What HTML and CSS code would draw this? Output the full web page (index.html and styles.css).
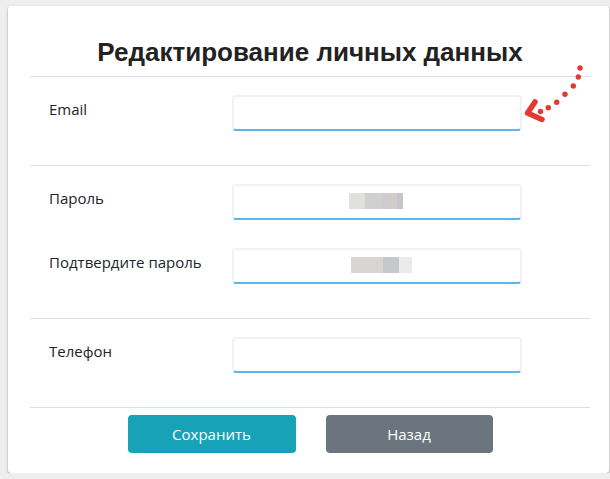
FILE: index.html
```html
<!DOCTYPE html>
<html lang="ru">
<head>
    <meta charset="UTF-8">
    <title>Редактирование личных данных</title>
    <link rel="stylesheet" href="styles.css">
</head>
<body>
<div class="card">
    <h1 class="card_title">Редактирование личных данных</h1>

    <div class="section">
        <div class="form_row">
            <label class="form_label" for="email">Email</label>
            <div class="field">
                <input id="email" class="form_input" type="text">
            </div>
        </div>
    </div>

    <div class="section">
        <div class="form_row">
            <label class="form_label" for="pass">Пароль</label>
            <div class="field">
                <input id="pass" class="form_input" type="text">
                <span class="blur blur_one">
                    <i style="background:#e0e0df;width:16px"></i><i style="background:#d0d0d0;width:16px"></i><i style="background:#cfcdcb;width:16px"></i><i style="background:#c5c6cc;width:6px"></i>
                </span>
            </div>
        </div>
        <div class="form_row">
            <label class="form_label" for="pass2">Подтвердите пароль</label>
            <div class="field">
                <input id="pass2" class="form_input" type="text">
                <span class="blur blur_two">
                    <i style="background:#d8d6d4;width:32px"></i><i style="background:#c7c8cb;width:16px"></i><i style="background:#ebebed;width:13px"></i>
                </span>
            </div>
        </div>
    </div>

    <div class="section">
        <div class="form_row">
            <label class="form_label" for="phone">Телефон</label>
            <div class="field">
                <input id="phone" class="form_input" type="text">
            </div>
        </div>
    </div>

    <div class="actions">
        <button class="btn btn_save">Сохранить</button>
        <button class="btn btn_back">Назад</button>
    </div>

    <!-- red dotted pointer drawn over the card -->
    <svg class="pointer" width="70" height="70" viewBox="0 0 70 70">
        <g fill="#e23a33">
            <circle cx="60" cy="8" r="2.7"/>
            <circle cx="58.3" cy="17" r="2.7"/>
            <circle cx="53.3" cy="26" r="2.7"/>
            <circle cx="45" cy="34.3" r="2.7"/>
            <circle cx="36.7" cy="42.3" r="2.7"/>
            <circle cx="28.3" cy="47.7" r="2.7"/>
            <circle cx="20.5" cy="51.5" r="2.7"/>
        </g>
        <path d="M15 42 L7.5 53 L22 59.5" fill="none" stroke="#e23a33" stroke-width="5.5"
              stroke-linecap="round" stroke-linejoin="round"/>
    </svg>
</div>
</body>
</html>
```

FILE: styles.css
```css
html, body {
    overflow: hidden;
}

body {
    margin: 0;
    padding: 6px 0 0 8px;
    background-color: #eeeeee;
    font-family: "Open Sans", "Noto Sans", sans-serif;
    color: #212529;
}

.card {
    position: relative;
    width: 560px;
    padding: 0 19px 20px 22px;
    background-color: #ffffff;
    border-radius: 3px;
    box-shadow: 0 1px 2px rgba(0, 0, 0, 0.45);
}

.card_title {
    margin: 0;
    padding: 31px 0 9px;
    height: 30px;
    line-height: 30px;
    text-align: center;
    font-family: "Liberation Sans", Arial, sans-serif;
    font-size: 26px;
    font-weight: bold;
    color: #222222;
    border-bottom: 1px solid #dedede;
}

.section {
    display: flex;
    flex-direction: column;
    gap: 28px;
    padding: 18px 0 34px;
    border-bottom: 1px solid #dedede;
}

.form_row {
    display: flex;
    padding: 0 68px 0 19px;
}

.form_label {
    flex: 0 0 183px;
    padding-top: 4px;
    line-height: 20px;
    font-size: 15px;
}

.field {
    position: relative;
    flex: 1;
}

.form_input {
    display: block;
    box-sizing: border-box;
    width: 100%;
    height: 36px;
    margin: 0;
    border: 2px solid #f2f2f2;
    border-bottom: 2px solid #5db7e6;
    border-radius: 4px;
    background-color: #ffffff;
    outline: none;
}

.blur {
    position: absolute;
    top: 9px;
    display: flex;
    height: 16px;
}

.blur i {
    display: block;
    height: 16px;
}

.blur_one {
    left: 117px;
}

.blur_two {
    left: 119px;
}

.actions {
    display: flex;
    justify-content: center;
    gap: 30px;
    padding-top: 7px;
}

.btn {
    height: 38px;
    border: none;
    border-radius: 4px;
    color: #ffffff;
    font-family: "Open Sans", "Noto Sans", sans-serif;
    font-size: 15px;
}

.btn_save {
    width: 168px;
    background-color: #17a2b8;
}

.btn_back {
    width: 167px;
    background-color: #6c757d;
}

.pointer {
    position: absolute;
    left: 512px;
    top: 54px;
}
```
